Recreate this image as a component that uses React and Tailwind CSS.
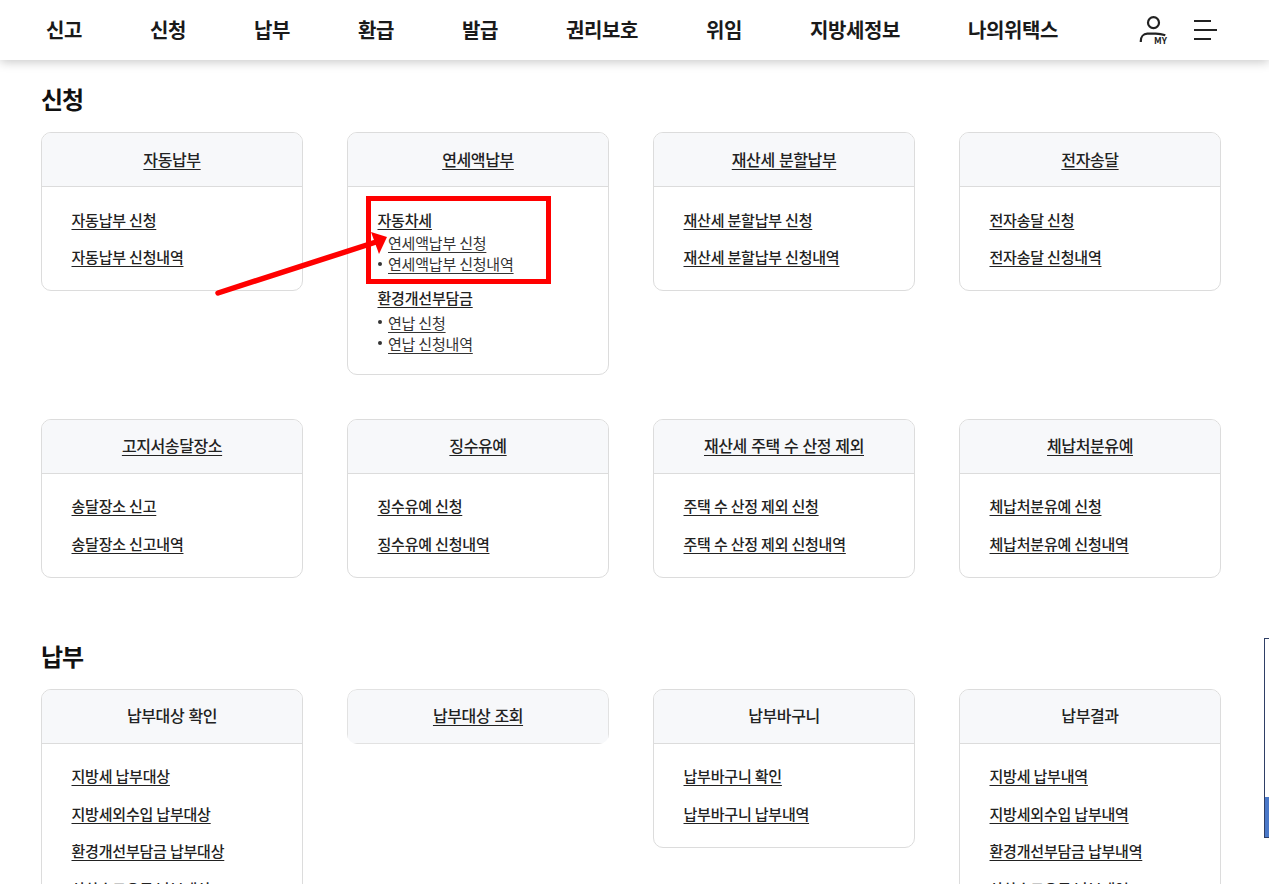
import React from "react";

const nav = ["신고", "신청", "납부", "환급", "발급", "권리보호", "위임", "지방세정보", "나의위택스"];

function Card({ title, plain, links, groups, headOnly }) {
  return (
    <div className={headOnly ? "rounded-[10px] overflow-hidden" : "rounded-[10px] border border-[#dcdcdc] overflow-hidden bg-white"}>
      <div
        className={
          headOnly
            ? "h-[55px] pb-[2px] flex items-center justify-center bg-[#f7f8fa] border border-[#e2e2e2] rounded-t-[10px] text-[16px] tracking-[-0.4px] [word-spacing:1px] font-medium text-[#222]"
            : "h-[54px] pb-[2px] flex items-center justify-center bg-[#f7f8fa] border-b border-[#dcdcdc] text-[16px] tracking-[-0.4px] [word-spacing:1px] font-medium text-[#222]"
        }
      >
        <span className={plain ? "" : "underline underline-offset-[3px]"}>{title}</span>
      </div>
      {links && (
        <ul className="pl-[29.5px] pr-[29px] pt-[21.5px] pb-[22px] flex flex-col gap-[15.5px]">
          {links.map((l) => (
            <li key={l} className="h-[22px] leading-[22px] text-[15px] tracking-[-0.2px] font-medium text-[#222]">
              <span className="underline underline-offset-[3px]">{l}</span>
            </li>
          ))}
        </ul>
      )}
      {groups && (
        <div className="pl-[29.5px] pr-[29px] pt-[21.5px] pb-[20px] flex flex-col gap-[13px]">
          {groups.map((g, idx) => (
            <div key={g.title}>
              <div className="h-[22px] leading-[22px] text-[15px] tracking-[-0.2px] font-medium text-[#222]">
                <span className="underline underline-offset-[3px]">{g.title}</span>
              </div>
              <ul className={idx === 0 ? "mt-[1.5px]" : "mt-[2.5px]"}>
                {g.items.map((i) => (
                  <li key={i} className="h-[21px] leading-[21px] text-[15px] tracking-[-0.2px] text-[#333] flex items-center">
                    <span className="w-[4px] h-[4px] rounded-full bg-[#333] mr-[6px] ml-[0.5px]" />
                    <span className="underline underline-offset-[3px]">{i}</span>
                  </li>
                ))}
              </ul>
            </div>
          ))}
        </div>
      )}
    </div>
  );
}

export default function App() {
  return (
    <div className="relative h-[884px] overflow-hidden bg-white font-['Noto_Sans_CJK_KR','Noto_Sans',sans-serif]">
      {/* Header */}
      <header className="h-[60px] bg-white shadow-[0_2px_10px_rgba(0,0,0,0.22)] flex items-center pl-[46px] relative">
        <nav className="flex gap-[68px] text-[20px] tracking-[-0.4px] font-bold text-[#1a1a1a]">
          {nav.map((n) => (
            <span key={n}>{n}</span>
          ))}
        </nav>
        <div className="absolute left-[1139px] top-[15px]">
          <svg width="30" height="30" viewBox="0 0 30 30" fill="none" stroke="#222" strokeWidth="2.2">
            <circle cx="14.5" cy="7.7" r="5.5" />
            <path d="M1.8 27v-1c0-4 2.5-7.3 6.5-7.3h8.5c3 0 6 .4 9.5 1.6" />
          </svg>
          <span className="absolute left-[15px] top-[20px] text-[9px] leading-[12px] font-bold text-[#222]">MY</span>
        </div>
        <div className="absolute left-[1194px] top-[20px] w-[23px] flex flex-col gap-[7px]">
          <span className="block h-[2px] w-[17px] bg-[#222]" />
          <span className="block h-[2px] w-[23px] bg-[#222]" />
          <span className="block h-[2px] w-[17px] bg-[#222]" />
        </div>
      </header>

      <main className="px-[41px] w-[1262px]">
        {/* 신청 */}
        <h2 className="mt-[21px] h-[36px] leading-[36px] text-[24px] tracking-[-1px] font-bold text-[#111]">신청</h2>
        <div className="mt-[15px] grid grid-cols-[repeat(4,262px)] gap-x-[44px] gap-y-[44px] items-start">
          <Card title="자동납부" links={["자동납부 신청", "자동납부 신청내역"]} />
          <Card
            title="연세액납부"
            groups={[
              { title: "자동차세", items: ["연세액납부 신청", "연세액납부 신청내역"] },
              { title: "환경개선부담금", items: ["연납 신청", "연납 신청내역"] },
            ]}
          />
          <Card title="재산세 분할납부" links={["재산세 분할납부 신청", "재산세 분할납부 신청내역"]} />
          <Card title="전자송달" links={["전자송달 신청", "전자송달 신청내역"]} />
          <Card title="고지서송달장소" links={["송달장소 신고", "송달장소 신고내역"]} />
          <Card title="징수유예" links={["징수유예 신청", "징수유예 신청내역"]} />
          <Card title="재산세 주택 수 산정 제외" links={["주택 수 산정 제외 신청", "주택 수 산정 제외 신청내역"]} />
          <Card title="체납처분유예" links={["체납처분유예 신청", "체납처분유예 신청내역"]} />
        </div>

        {/* 납부 */}
        <h2 className="mt-[60px] h-[36px] leading-[36px] text-[24px] tracking-[-1px] font-bold text-[#111]">납부</h2>
        <div className="mt-[15px] grid grid-cols-[repeat(4,262px)] gap-x-[44px] items-start">
          <Card
            title="납부대상 확인"
            plain
            links={["지방세 납부대상", "지방세외수입 납부대상", "환경개선부담금 납부대상", "상하수도요금 납부대상"]}
          />
          <Card title="납부대상 조회" headOnly />
          <Card title="납부바구니" plain links={["납부바구니 확인", "납부바구니 납부내역"]} />
          <Card
            title="납부결과"
            plain
            links={["지방세 납부내역", "지방세외수입 납부내역", "환경개선부담금 납부내역", "상하수도요금 납부내역"]}
          />
        </div>
      </main>

      {/* Annotation: red box and arrow */}
      <div className="absolute left-[366px] top-[196px] w-[185px] h-[88px] border-[5px] border-[#ff0000]" />
      <svg className="absolute left-0 top-0 pointer-events-none" width="1269" height="884" fill="none">
        <path d="M218 293L376 242" stroke="#ff0000" strokeWidth="5.5" strokeLinecap="round" />
        <path d="M371 232L387 237L379 254Z" fill="#ff0000" />
      </svg>

      {/* Side scroll marker */}
      <div className="absolute left-[1264px] top-[638px] w-[5px] h-[200px] border-l border-t border-b border-[#2f3f66] bg-white flex flex-col justify-end">
        <div className="h-[40px] bg-[#4a78c8]" />
      </div>
    </div>
  );
}
